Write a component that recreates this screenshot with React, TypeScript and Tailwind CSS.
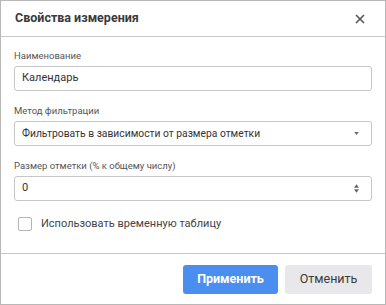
import React from "react";

export default function App() {
  const font = { fontFamily: "Roboto, 'Noto Sans', sans-serif" };
  return (
    <div
      className="w-[386px] h-[305px] border border-[#b8b8b8] bg-white flex flex-col text-[#333]"
      style={font}
    >
      <div className="h-[35px] flex items-center justify-between pl-[14px] pr-[20px] border-b border-[#c8c8cc] box-content">
        <span className="text-[12.5px] font-bold text-[#3a3a3a]">Свойства измерения</span>
        <svg width="10" height="10" viewBox="0 0 10 10">
          <path d="M1 1L9 9M9 1L1 9" stroke="#555" strokeWidth="1.6" />
        </svg>
      </div>
      <div className="flex-1 flex flex-col px-[13px] pt-[12px]">
        <div className="text-[9.5px] leading-[14px] text-[#555]">Наименование</div>
        <div className="mt-[3px] h-[25px] border border-[#c6c6c6] rounded-[3px] flex items-center px-[7px] text-[11px] text-[#333]">
          Календарь
        </div>
        <div className="mt-[13px] text-[9.5px] leading-[14px] text-[#555]">Метод фильтрации</div>
        <div className="mt-[3px] h-[25px] border border-[#c6c6c6] rounded-[3px] flex items-center justify-between pl-[7px] pr-[12px] text-[10.3px] text-[#333]">
          <span>Фильтровать в зависимости от размера отметки</span>
          <svg width="5" height="3" viewBox="0 0 6 4">
            <path d="M0 0H6L3 4Z" fill="#666" />
          </svg>
        </div>
        <div className="mt-[13px] text-[9.5px] leading-[14px] text-[#555]">Размер отметки (% к общему числу)</div>
        <div className="mt-[3px] h-[25px] border border-[#c6c6c6] rounded-[3px] flex items-center justify-between pl-[7px] pr-[12px] text-[11px] text-[#333]">
          <span>0</span>
          <svg width="5" height="9" viewBox="0 0 6 10">
            <path d="M0 4H6L3 0Z" fill="#666" />
            <path d="M0 6H6L3 10Z" fill="#666" />
          </svg>
        </div>
        <div className="mt-[15px] flex items-center pl-[4px]">
          <div className="w-[14px] h-[14px] border border-[#b5b5b5] rounded-[2px]" />
          <span className="ml-[9px] text-[11px] text-[#444]">Использовать временную таблицу</span>
        </div>
      </div>
      <div className="h-[51px] border-t border-[#c8c8cc] flex items-center justify-end pr-[13px] gap-[7px]">
        <button className="w-[95px] h-[29px] rounded-[3px] bg-[#4a8ff0] text-white text-[12.5px] font-bold">
          Применить
        </button>
        <button className="w-[87px] h-[29px] rounded-[3px] bg-[#e8e8ea] text-[#3a3a3a] text-[12.5px]">
          Отменить
        </button>
      </div>
    </div>
  );
}
